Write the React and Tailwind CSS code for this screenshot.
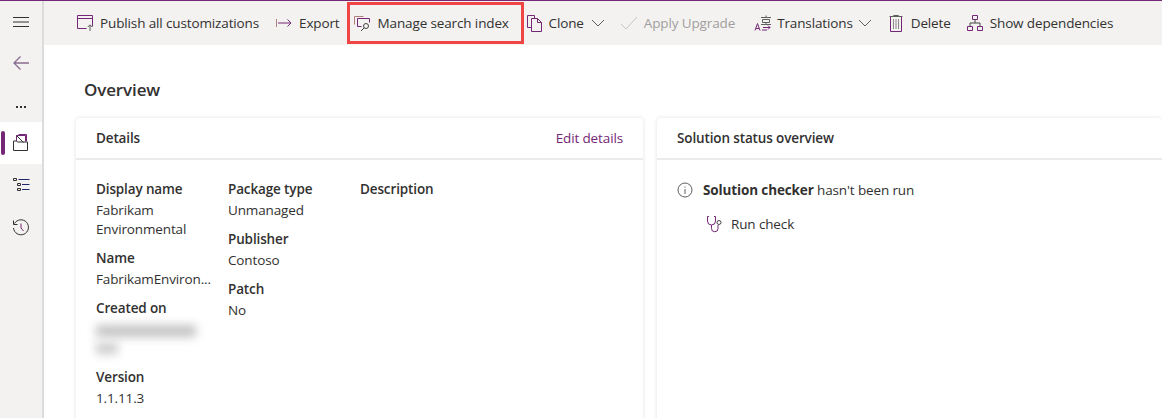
const purple = '#742774';

const PublishIcon = () => (
  <svg width="18" height="18" viewBox="0 0 18 18" fill="none" stroke={purple} strokeWidth="1">
    <path d="M1.500 1.500h15v11M1.500 1.500v13h9M1.500 4.500h15" />
    <path d="M14 17v-6M11.800 13l2.200-2.200 2.200 2.200" stroke="#605e5c" />
  </svg>
);

const ExportIcon = () => (
  <svg width="18" height="18" viewBox="0 0 18 18" fill="none" strokeWidth="1">
    <path d="M1.500 5v8" stroke="#b0817c" />
    <path d="M3 9h13M12.500 5.500 16 9l-3.500 3.500" stroke={purple} />
  </svg>
);

const ManageIcon = () => (
  <svg width="18" height="18" viewBox="0 0 18 18" fill="none" strokeWidth="1">
    <path d="M1.500 10.500v-8h9" stroke="#b0817c" />
    <path d="M4.500 12.500v-8h12v4M4.500 12.500h4" stroke={purple} />
    <circle cx="13" cy="12" r="2.500" stroke="#444" />
    <path d="M11 14l-3 3" stroke="#444" />
  </svg>
);

const CloneIcon = () => (
  <svg width="18" height="18" viewBox="0 0 18 18" fill="none" strokeWidth="1" stroke={purple}>
    <path d="M5.500 13.500h-4v-12h7v3" />
    <path d="M5.500 4.500h6l4 4v9h-10zM11.500 4.500v4h4" />
  </svg>
);

const CheckIcon = () => (
  <svg width="18" height="18" viewBox="0 0 18 18" fill="none" stroke="#c8c6c4" strokeWidth="1">
    <path d="M1 10l5 5L17 3" />
  </svg>
);

const TranslateIcon = () => (
  <svg width="18" height="18" viewBox="0 0 18 18" fill="none" strokeWidth="1">
    <path d="M1 16.500l2.500-7 2.500 7M2 14.500h3" stroke={purple} />
    <path d="M7 3.500h10M12 1.500v2M8.500 5.500h7v3h-7zM7 10.500h10M12 8.500v2" stroke="#605e5c" />
    <path d="M9 13.500h7M14 11.500l2 2-2 2M8 16h5" stroke={purple} />
  </svg>
);

const DeleteIcon = () => (
  <svg width="18" height="18" viewBox="0 0 18 18" fill="none" strokeWidth="1">
    <path d="M6.500 2.500v-1h5v1M2.500 2.500h13" stroke="#605e5c" />
    <path d="M3.500 3v14.500h11V3" stroke={purple} />
    <path d="M6.500 5v10M9 5v10M11.500 5v10" stroke="#8a8886" />
  </svg>
);

const DepsIcon = () => (
  <svg width="18" height="18" viewBox="0 0 18 18" fill="none" stroke={purple} strokeWidth="1">
    <path d="M6.500 1.500h5v4h-5zM1.500 12.500h5v4h-5zM11.500 12.500h5v4h-5z" />
    <path d="M9 5.500v3.500M4 12.500V9h10v3.500" stroke="#444" />
  </svg>
);

const SolutionIcon = () => (
  <svg width="18" height="18" viewBox="0 0 18 18" fill="none" stroke="#323130" strokeWidth="1">
    <path d="M1.500 16.500V7h3l1 1h10v8.500z" />
    <path d="M4.500 7V1.500h9v6" stroke={purple} />
    <path d="M4.500 1.500l7 7" />
    <path d="M6.500 0.500h8v7" stroke={purple} />
  </svg>
);

const ListIcon = () => (
  <svg width="18" height="16" viewBox="0 0 18 16" fill="none" stroke="#323130" strokeWidth="1">
    <path d="M1.500 1.500h3v2h-3zM5.500 6.500h3v2h-3zM5.500 11.500h3v2h-3z" />
    <path d="M6.500 2.500h11M10 7.500h7.500M10 12.500h7.500" stroke="#1b2a6b" />
  </svg>
);

const HistoryIcon = () => (
  <svg width="18" height="18" viewBox="0 0 18 18" fill="none" stroke="#323130" strokeWidth="1">
    <path d="M2.500 4.500A7.500 7.500 0 1 1 1.500 9" />
    <path d="M1.500 1.500v4h4" />
    <path d="M9 4.500V9l2.500 3" stroke={purple} />
  </svg>
);

const StethIcon = () => (
  <svg width="18" height="18" viewBox="0 0 18 18" fill="none" stroke={purple} strokeWidth="1">
    <path d="M3 1.500H1.500V6a4 4 0 0 0 8 0V1.500H8" />
    <path d="M5.500 10v3.500a3 3 0 0 0 6.500 0V10" />
    <circle cx="13" cy="7.500" r="2" stroke="#444" />
  </svg>
);

const Chevron = ({ className = '' }) => (
  <svg className={className} width="14" height="14" viewBox="0 0 14 14" fill="none" stroke="#605e5c" strokeWidth="1">
    <path d="M1 4l6 6 6-6" />
  </svg>
);

function ToolItem({ icon, label, chevron, disabled, className = '', chevronClass = '', labelClass = 'ml-[6px]' }) {
  return (
    <div className={`flex items-center shrink-0 ${className}`}>
      {icon}
      <span className={`${labelClass} ${disabled ? 'text-[#a19f9d]' : 'text-[#323130]'}`}>{label}</span>
      {chevron && <Chevron className={chevronClass} />}
    </div>
  );
}

function Field({ label, children, className = '' }) {
  return (
    <div className={className}>
      <div className="font-semibold text-[#323130] leading-[20px]">{label}</div>
      <div className="text-[#323130] leading-[19px] mt-[2px]">{children}</div>
    </div>
  );
}

export default function App() {
  return (
    <div className="w-[1162px] h-[418px] overflow-hidden bg-white flex flex-col border-t border-[#742774] text-[13.5px] font-['Open_Sans','Liberation_Sans',sans-serif] tracking-[-0.13px]">
      <div className="flex flex-1 min-h-0">
        {/* left nav */}
        <div className="w-[44px] shrink-0 bg-[#f3f2f1] border-r-2 border-[#dcdcdc] flex flex-col items-center">
          <svg className="mt-[15px]" width="16" height="12" viewBox="0 0 16 12" fill="none" stroke="#323130" strokeWidth="1">
            <path d="M0 1.500h16M0 6h16M0 10.500h16" />
          </svg>
          <svg className="mt-[27px]" width="18" height="16" viewBox="0 0 18 16" fill="none" stroke="#8a6d8f" strokeWidth="1.300">
            <path d="M17 8H2M8.500 1.500 2 8l6.500 6.500" />
          </svg>
          <div className="mt-[31px] h-[10px] flex items-center gap-[2px]">
            <span className="w-[2px] h-[2px] bg-[#323130]" />
            <span className="w-[2px] h-[2px] bg-[#323130]" />
            <span className="w-[2px] h-[2px] bg-[#323130]" />
          </div>
          <div className="mt-[10px] w-full h-[42px] bg-white flex items-center justify-center relative">
            <span className="absolute left-[1px] top-[9px] w-[4px] h-[24px] rounded-sm bg-[#742774]" />
            <SolutionIcon />
          </div>
          <div className="mt-[13px]"><ListIcon /></div>
          <div className="mt-[26px]"><HistoryIcon /></div>
        </div>

        <div className="flex-1 min-w-0 flex flex-col">
          {/* command bar */}
          <div className="h-[44px] shrink-0 bg-[#f3f2f1] flex items-center pl-[32px]">
            <ToolItem icon={<PublishIcon />} label="Publish all customizations" />
            <ToolItem icon={<ExportIcon />} label="Export" className="ml-[16px]" />
            <ToolItem
              icon={<ManageIcon />}
              label="Manage search index"
              labelClass="ml-[7px]"
              className="ml-[7px] self-start mt-[1px] h-[42px] w-[177px] border-[3px] border-[#f04545] pl-[3px]"
            />
            <ToolItem icon={<CloneIcon />} label="Clone" chevron chevronClass="ml-[7px]" labelClass="ml-[5px]" className="ml-[2px]" />
            <ToolItem icon={<CheckIcon />} label="Apply Upgrade" disabled className="ml-[15px]" />
            <ToolItem icon={<TranslateIcon />} label="Translations" chevron chevronClass="ml-[5px]" labelClass="ml-[5px]" className="ml-[19px]" />
            <ToolItem icon={<DeleteIcon />} label="Delete" className="ml-[15px]" />
            <ToolItem icon={<DepsIcon />} label="Show dependencies" className="ml-[15px]" />
          </div>

          {/* overview */}
          <div className="flex-1 min-h-0 pl-[32px] overflow-hidden">
            <h1 className="mt-[33px] text-[17px] leading-[24px] font-semibold text-[#323130] pl-[8px]">Overview</h1>
            <div className="mt-[16px] flex gap-[14px]">
              <div className="w-[567px] shrink-0 h-[320px] rounded-t bg-white shadow-[0_0_4px_rgba(0,0,0,0.12)]">
                <div className="h-[42px] border-b-2 border-[#edebe9] flex items-center justify-between px-[20px]">
                  <span className="font-semibold text-[#323130]">Details</span>
                  <span className="text-[#742774]">Edit details</span>
                </div>
                <div className="flex pl-[20px] pt-[19px]">
                  <div className="w-[132px] flex flex-col gap-[9px]">
                    <Field label="Display name">Fabrikam<br />Environmental</Field>
                    <Field label="Name">FabrikamEnviron...</Field>
                    <Field label="Created on">
                      <div className="h-[38px] pt-[5px]">
                        <div className="h-[12px] w-[100px] bg-[#c4c4c4] blur-[5px]" />
                        <div className="h-[11px] w-[22px] mt-[6px] bg-[#cccccc] blur-[5px]" />
                      </div>
                    </Field>
                    <Field label="Version">1.1.11.3</Field>
                  </div>
                  <div className="w-[132px] flex flex-col gap-[9px]">
                    <Field label="Package type">Unmanaged</Field>
                    <Field label="Publisher">Contoso</Field>
                    <Field label="Patch">No</Field>
                  </div>
                  <Field label="Description" />
                </div>
              </div>

              <div className="flex-1 h-[320px] rounded-t bg-white shadow-[0_0_4px_rgba(0,0,0,0.12)]">
                <div className="h-[42px] border-b-2 border-[#edebe9] flex items-center px-[20px]">
                  <span className="font-semibold text-[#323130]">Solution status overview</span>
                </div>
                <div className="pl-[20px] pt-[20px]">
                  <div className="flex items-center text-[#323130]">
                    <svg width="16" height="16" viewBox="0 0 16 16" fill="none" stroke="#605e5c" strokeWidth="1">
                      <circle cx="8" cy="8" r="7" />
                      <path d="M8 7v5M8 4.500v1.200" />
                    </svg>
                    <span className="ml-[10px]"><b className="font-bold">Solution checker</b> hasn't been run</span>
                  </div>
                  <div className="flex items-center mt-[14px] ml-[29px] text-[#323130]">
                    <StethIcon />
                    <span className="ml-[7px]">Run check</span>
                  </div>
                </div>
              </div>
            </div>
          </div>
        </div>
      </div>
    </div>
  );
}
